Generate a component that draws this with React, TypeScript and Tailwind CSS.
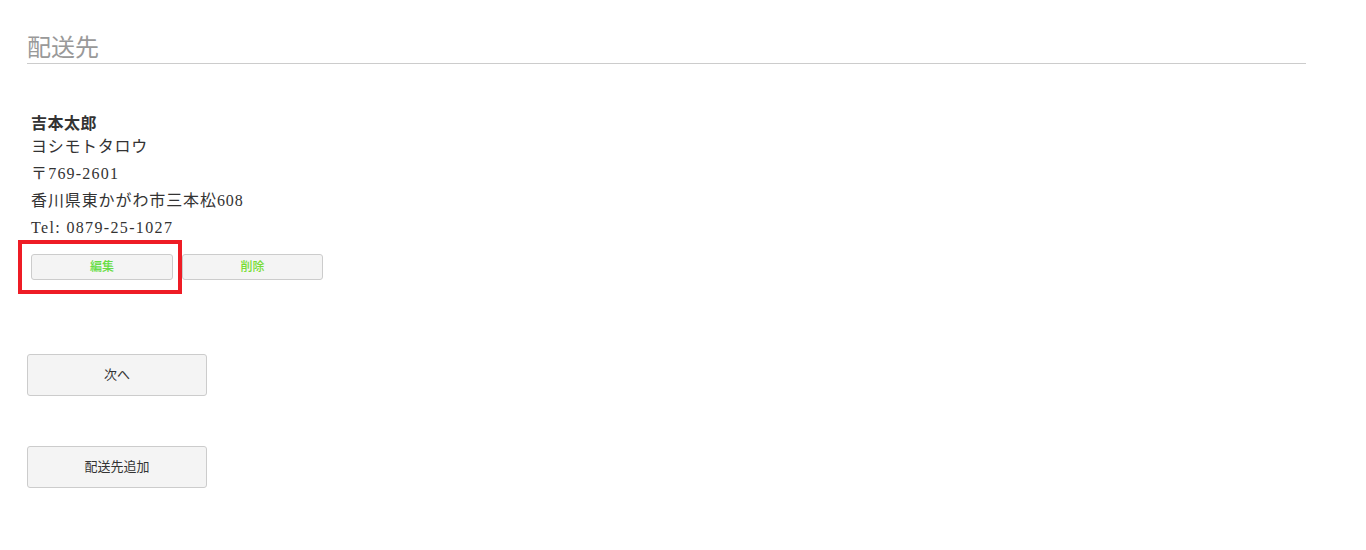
import React from "react";

const serif = "font-['Liberation_Serif','Noto_Sans_CJK_JP',serif]";
const sans = "font-['Liberation_Sans','Noto_Sans_CJK_JP',sans-serif]";

export default function App() {
  return (
    <div className={`w-[1366px] h-[550px] bg-white ${sans}`}>
      <div className="pl-[27px] pr-[60px] pt-[33px]">
        <h2 className="text-[24px] leading-[30px] text-[#999] border-b border-[#ccc]">配送先</h2>

        <div className={`pl-[4px] pt-[51px] text-[16px] text-[#333] ${serif}`}>
          <p className="font-bold leading-[18px] tracking-[0.5px]">吉本太郎</p>
          <p className="leading-[27px] tracking-[0.7px]">ヨシモトタロウ</p>
          <p className="leading-[27px] tracking-[1.2px]">〒769-2601</p>
          <p className="leading-[27px] tracking-[0.9px]">香川県東かがわ市三本松608</p>
          <p className="leading-[27px] tracking-[1.35px]">Tel: 0879-25-1027</p>
        </div>

        <div className="relative flex gap-[9px] pl-[4px] mt-[13px]">
          <div className="absolute left-[-9px] top-[-14px] w-[164px] h-[54px] border-4 border-[#ee1c25]" />
          <button className="w-[142px] h-[26px] bg-[#f4f4f4] border border-[#ccc] rounded-[3px] text-[12px] text-[#66dd44] font-medium">
            編集
          </button>
          <button className="w-[141px] h-[26px] bg-[#f4f4f4] border border-[#ccc] rounded-[3px] text-[12px] text-[#77dd33] font-medium">
            削除
          </button>
        </div>

        <div className="flex flex-col gap-[50px] mt-[74px]">
          <button className="w-[180px] h-[42px] bg-[#f4f4f4] border border-[#ccc] rounded-[3px] text-[13px] text-[#333]">
            次へ
          </button>
          <button className="w-[180px] h-[42px] bg-[#f4f4f4] border border-[#ccc] rounded-[3px] text-[13px] text-[#333]">
            配送先追加
          </button>
        </div>
      </div>
    </div>
  );
}
